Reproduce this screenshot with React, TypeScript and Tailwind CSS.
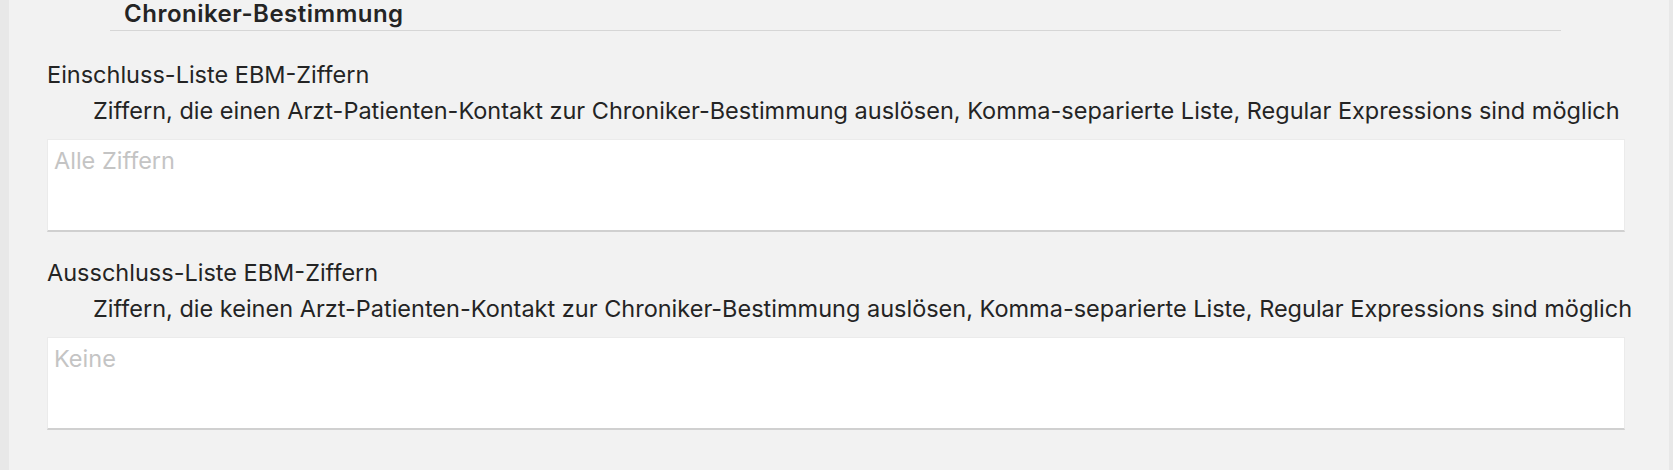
import React from 'react';

const font = { fontFamily: 'Inter, "Noto Sans", sans-serif' };

function ListField({ label, hint, placeholder }: { label: string; hint: string; placeholder: string }) {
  return (
    <div className="flex flex-col">
      <p className="text-[23.5px] leading-[28px] text-[#242424]">{label}</p>
      <p className="mt-[8px] pl-[46px] text-[23.5px] leading-[28px] text-[#242424] whitespace-nowrap">{hint}</p>
      <textarea
        placeholder={placeholder}
        className="mt-[14px] h-[93px] w-full resize-none bg-white px-[6px] pt-[7px] text-[23.5px] leading-[28px] text-[#242424] placeholder:text-[#c4c4c4] outline-none border border-[#ebebeb] border-b-2 border-b-[#d0d0d0]"
      />
    </div>
  );
}

export default function App() {
  return (
    <div className="flex w-[1673px] h-[470px] bg-[#f2f2f2] overflow-hidden" style={font}>
      <div className="w-[9px] shrink-0 bg-[#e8e8e8]" />
      <div className="flex-1 min-w-0 flex flex-col pl-[38px] pr-[44px]">
        <div className="ml-[63px] w-[1451px] h-[31px] pt-[1px] border-b border-[#d6d6d6]">
          <h2 className="pl-[14px] text-[24px] leading-[26px] font-[560] tracking-[0.5px] text-[#242424]">Chroniker-Bestimmung</h2>
        </div>
        <div className="mt-[30px] flex flex-col gap-[27px]">
          <ListField
            label="Einschluss-Liste EBM-Ziffern"
            hint="Ziffern, die einen Arzt-Patienten-Kontakt zur Chroniker-Bestimmung auslösen, Komma-separierte Liste, Regular Expressions sind möglich"
            placeholder="Alle Ziffern"
          />
          <ListField
            label="Ausschluss-Liste EBM-Ziffern"
            hint="Ziffern, die keinen Arzt-Patienten-Kontakt zur Chroniker-Bestimmung auslösen, Komma-separierte Liste, Regular Expressions sind möglich"
            placeholder="Keine"
          />
        </div>
      </div>
      <div className="w-[4px] shrink-0 bg-[#e8e8e8]" />
    </div>
  );
}
